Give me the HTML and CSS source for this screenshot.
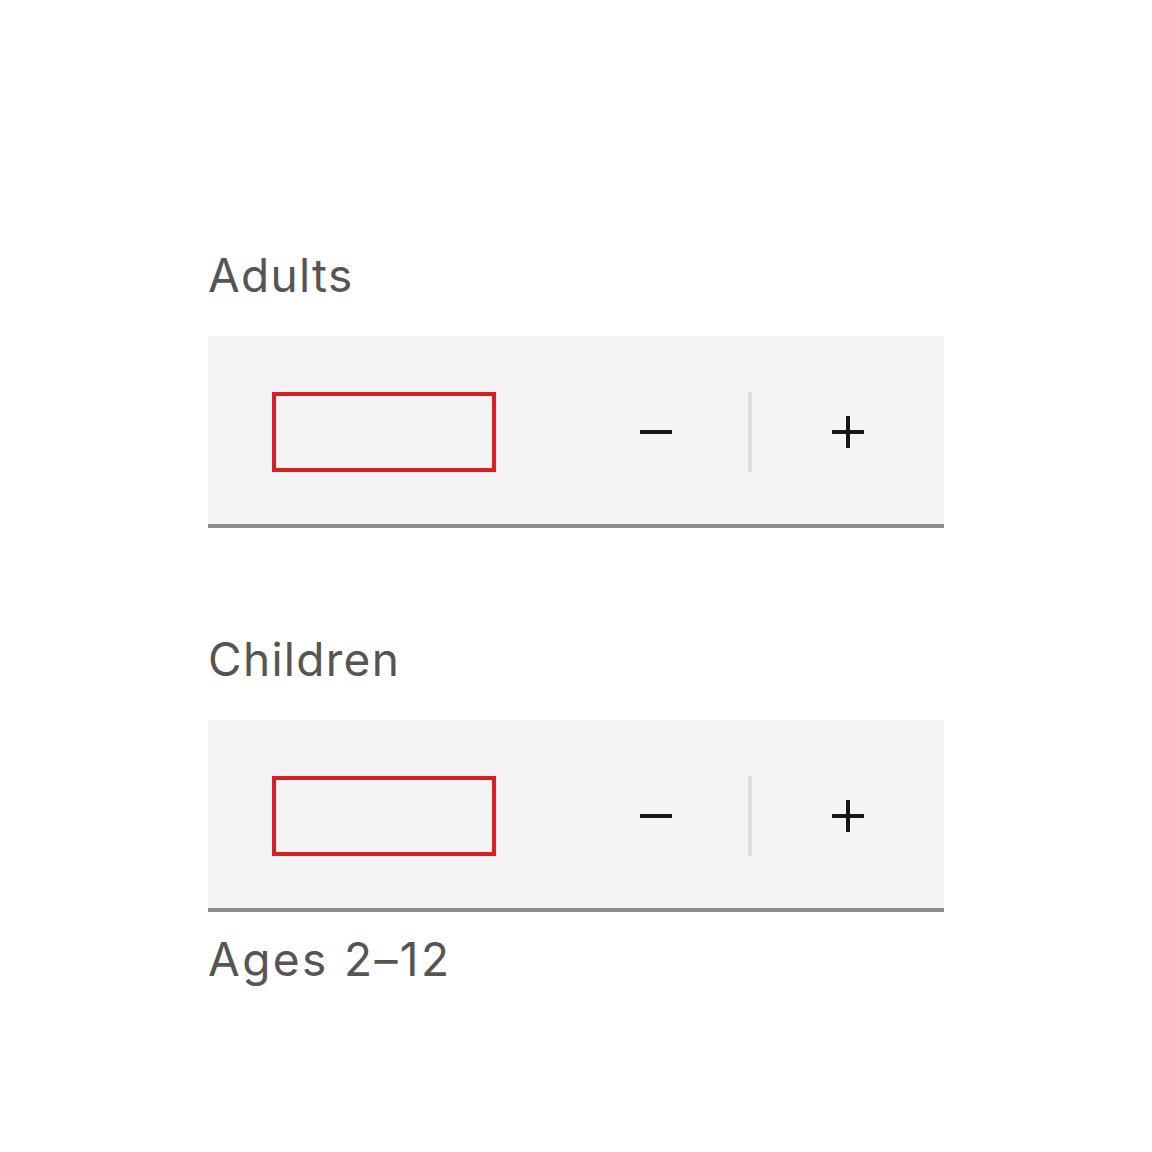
FILE: index.html
```html
<!DOCTYPE html>
<html>
<head>
<meta charset="utf-8">
<link rel="stylesheet" href="styles.css">
</head>
<body>
<div class="page">
  <div class="group">
    <label class="label">Adults</label>
    <div class="field">
      <div class="input-wrap"><div class="input"></div></div>
      <button class="btn minus"><svg width="32" height="32" viewBox="0 0 32 32"><rect x="0" y="14" width="32" height="4" fill="#161616"/></svg></button>
      <span class="divider"></span>
      <button class="btn plus"><svg width="32" height="32" viewBox="0 0 32 32"><rect x="0" y="14" width="32" height="4" fill="#161616"/><rect x="14" y="0" width="4" height="32" fill="#161616"/></svg></button>
    </div>
  </div>
  <div class="group second">
    <label class="label">Children</label>
    <div class="field">
      <div class="input-wrap"><div class="input"></div></div>
      <button class="btn minus"><svg width="32" height="32" viewBox="0 0 32 32"><rect x="0" y="14" width="32" height="4" fill="#161616"/></svg></button>
      <span class="divider"></span>
      <button class="btn plus"><svg width="32" height="32" viewBox="0 0 32 32"><rect x="0" y="14" width="32" height="4" fill="#161616"/><rect x="14" y="0" width="4" height="32" fill="#161616"/></svg></button>
    </div>
    <div class="helper">Ages 2–12</div>
  </div>
</div>
</body>
</html>
```

FILE: styles.css
```css
html, body {
  margin: 0;
  padding: 0;
  background: #ffffff;
}
.page {
  padding: 240px 0 0 208px;
  font-family: Inter, "Noto Sans", sans-serif;
}
.group {
  width: 736px;
  display: flex;
  flex-direction: column;
}
.second {
  margin-top: 96px;
}
.label {
  font-size: 46px;
  line-height: 64px;
  height: 64px;
  padding-top: 3px;
  color: #555555;
  letter-spacing: 1.3px;
  margin-bottom: 29px;
}
.field {
  display: flex;
  align-items: center;
  height: 192px;
  background: #f4f4f4;
  box-shadow: inset 0 -4px 0 #8d8d8d;
}
.input-wrap {
  flex: 1;
  display: flex;
  align-items: center;
  padding-left: 64px;
}
.input {
  width: 216px;
  height: 72px;
  border: 4px solid #da1e28;
}
.btn {
  width: 192px;
  height: 192px;
  border: 0;
  padding: 0;
  background: transparent;
  display: flex;
  align-items: center;
  justify-content: center;
}
.btn svg {
  display: block;
}
.minus {
  margin-right: -4px;
}
.divider {
  width: 4px;
  height: 80px;
  background: #dedede;
  position: relative;
  z-index: 1;
}
.helper {
  font-size: 46px;
  line-height: 64px;
  color: #555555;
  letter-spacing: 2.4px;
  margin-top: 15px;
}
```
